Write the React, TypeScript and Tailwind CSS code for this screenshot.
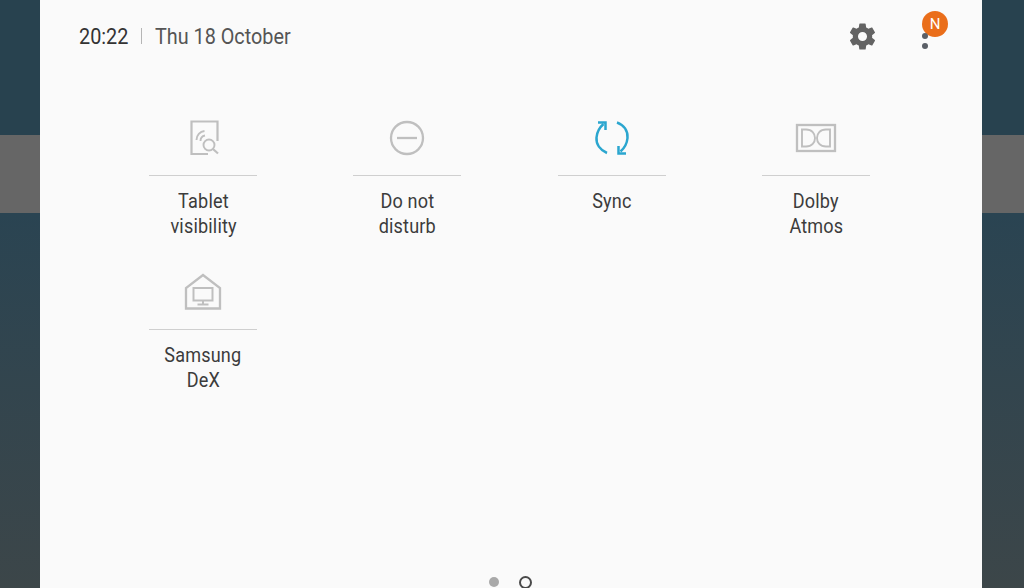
import React from "react";

const Side = () => (
  <div className="w-full h-full flex flex-col">
    <div className="h-[135px] bg-[#28424f]" />
    <div className="h-[78px] bg-[#666666]" />
    <div className="flex-1 bg-gradient-to-b from-[#2a4452] to-[#3c4649]" />
  </div>
);

const TabletIcon = () => (
  <svg width="36" height="40" viewBox="0 0 36 40" fill="none" stroke="#bfbfbf" strokeWidth="1.9" className="ml-[2px]">
    <path d="M22 36H5.500V3.500H31.500V23" strokeWidth="2.200" />
    <path d="M10.500 22C10.500 17 14 13.500 18.500 13" />
    <path d="M14.500 23C14.500 20 16.500 18 19 17.500" />
    <circle cx="23" cy="27" r="5.500" />
    <path d="M27 31L32 35.500" strokeWidth="2.200" />
  </svg>
);

const DndIcon = () => (
  <svg width="36" height="36" viewBox="0 0 36 36" fill="none" stroke="#bfbfbf" strokeWidth="2.300">
    <circle cx="18" cy="18" r="16" />
    <path d="M8 18H28" />
  </svg>
);

const SyncIcon = () => (
  <svg width="38" height="38" viewBox="0 0 38 38" fill="none" stroke="#2ba6cf" strokeWidth="2.500">
    <path d="M14 34C7 31 3 25 3.500 18.500C4 13 6.500 8.500 10.500 5" />
    <path d="M5 3.500H12.500V11" />
    <path d="M24 3.500C31 6 35 12 34.500 19C34 24.500 31.500 29 27.500 32.500" />
    <path d="M33 34.500H25.500V27" />
  </svg>
);

const DolbyIcon = () => (
  <svg width="42" height="30" viewBox="0 0 42 30" fill="none" stroke="#bfbfbf" strokeWidth="2.300">
    <rect x="2" y="2" width="38" height="26" />
    <path d="M7 6.500H11C17 6.500 20 10.500 20 15C20 19.500 17 23.500 11 23.500H7Z" strokeWidth="1.900" />
    <path d="M35 6.500H31C25 6.500 22 10.500 22 15C22 19.500 25 23.500 31 23.500H35Z" strokeWidth="1.900" />
  </svg>
);

const DexIcon = () => (
  <svg width="38" height="38" viewBox="0 0 38 38" fill="none" stroke="#bfbfbf" strokeWidth="2.300">
    <path d="M2 35.500V15L19 2L36 15V35.500Z" />
    <rect x="9.500" y="15" width="19" height="12.500" strokeWidth="2" />
    <path d="M19 27.500V31M13.500 31.500H24.500" strokeWidth="2" />
  </svg>
);

const tiles: { icon: React.ReactNode; lines: string[] }[] = [
  { icon: <TabletIcon />, lines: ["Tablet", "visibility"] },
  { icon: <DndIcon />, lines: ["Do not", "disturb"] },
  { icon: <SyncIcon />, lines: ["Sync"] },
  { icon: <DolbyIcon />, lines: ["Dolby", "Atmos"] },
  { icon: <DexIcon />, lines: ["Samsung", "DeX"] },
];

export default function App() {
  return (
    <div
      className="w-[1024px] h-[588px] overflow-hidden flex bg-[#fafafa]"
      style={{ fontFamily: "Roboto, sans-serif" }}
    >
      <div className="w-[40px] shrink-0">
        <Side />
      </div>
      <main className="w-[942px] shrink-0 flex flex-col bg-[#fafafa] relative">
        <header className="h-[72px] shrink-0 flex items-center pl-[39px] pr-[33px]">
          <span className="w-[50px] whitespace-nowrap origin-left scale-x-[0.9] text-[22px] text-[#333333]">
            20:22
          </span>
          <span className="w-px h-[16px] bg-[#b5b5b5] ml-[12px] mr-[13px]" />
          <span className="w-[136px] whitespace-nowrap origin-left scale-x-[0.9] text-[22px] text-[#555555]">
            Thu 18 October
          </span>
          <div className="ml-auto flex items-center">
            <svg width="31" height="31" viewBox="0 0 24 24" fill="#636363" className="mr-[44px]">
              <path
                fillRule="evenodd"
                d="M19.4 13c.04-.33.1-.66.1-1s-.06-.67-.1-1l2.1-1.65c.2-.15.25-.42.12-.64l-2-3.46c-.12-.22-.39-.3-.61-.22l-2.49 1c-.52-.4-1.08-.73-1.69-.98l-.38-2.65A.49.49 0 0 0 14 2h-4c-.25 0-.46.18-.49.42l-.38 2.65c-.61.25-1.17.59-1.69.98l-2.49-1a.5.5 0 0 0-.61.22l-2 3.46c-.13.22-.07.49.12.64L4.57 11c-.04.33-.07.67-.07 1s.03.67.07 1l-2.11 1.65c-.19.15-.25.42-.12.64l2 3.46c.12.22.39.3.61.22l2.49-1c.52.4 1.08.73 1.69.98l.38 2.65c.03.24.24.42.49.42h4c.25 0 .46-.18.49-.42l.38-2.65c.61-.25 1.17-.59 1.69-.98l2.49 1c.22.08.49 0 .61-.22l2-3.46c.12-.22.07-.49-.12-.64L19.4 13ZM12 15.500a3.500 3.500 0 1 1 0-7 3.500 3.500 0 0 1 0 7Z"
              />
            </svg>
            <div className="relative w-[6px] h-[16px] flex flex-col gap-[4px] mr-[21px] mt-[10px]">
              <span className="absolute left-0 top-[-22px] w-[26px] h-[26px] rounded-full bg-[#ea6e1a] text-white text-[15px] flex items-center justify-center">
                N
              </span>
              <span className="relative w-[6px] h-[6px] rounded-full bg-[#5a5f66]" />
              <span className="relative w-[6px] h-[6px] rounded-full bg-[#5a5f66]" />
            </div>
          </div>
        </header>

        <div className="pl-[61px] grid grid-cols-[repeat(4,204.3px)] auto-rows-[154px]">
          {tiles.map((t) => (
            <div key={t.lines[0]} className="flex flex-col items-center">
              <div className="w-[108px] h-[104px] shrink-0 flex items-center justify-center border-b border-[#cfcfcf] pt-[37px] pb-[8px]">
                {t.icon}
              </div>
              <div className="pt-[13px] flex flex-col items-center text-[21px] leading-[25px] text-[#3c3c3c] tracking-[0.2px]">
                {t.lines.map((l) => (
                  <div key={l} className="whitespace-nowrap scale-x-[0.86]">
                    {l}
                  </div>
                ))}
              </div>
            </div>
          ))}
        </div>

        <div className="absolute left-0 right-0 bottom-0 h-[12px] pr-[2px] flex justify-center items-center gap-[20px]">
          <span className="w-[10px] h-[10px] rounded-full bg-[#a9a9a9]" />
          <span className="w-[13px] h-[13px] rounded-full border-2 border-[#4a4a4a]" />
        </div>
      </main>
      <div className="flex-1">
        <Side />
      </div>
    </div>
  );
}
